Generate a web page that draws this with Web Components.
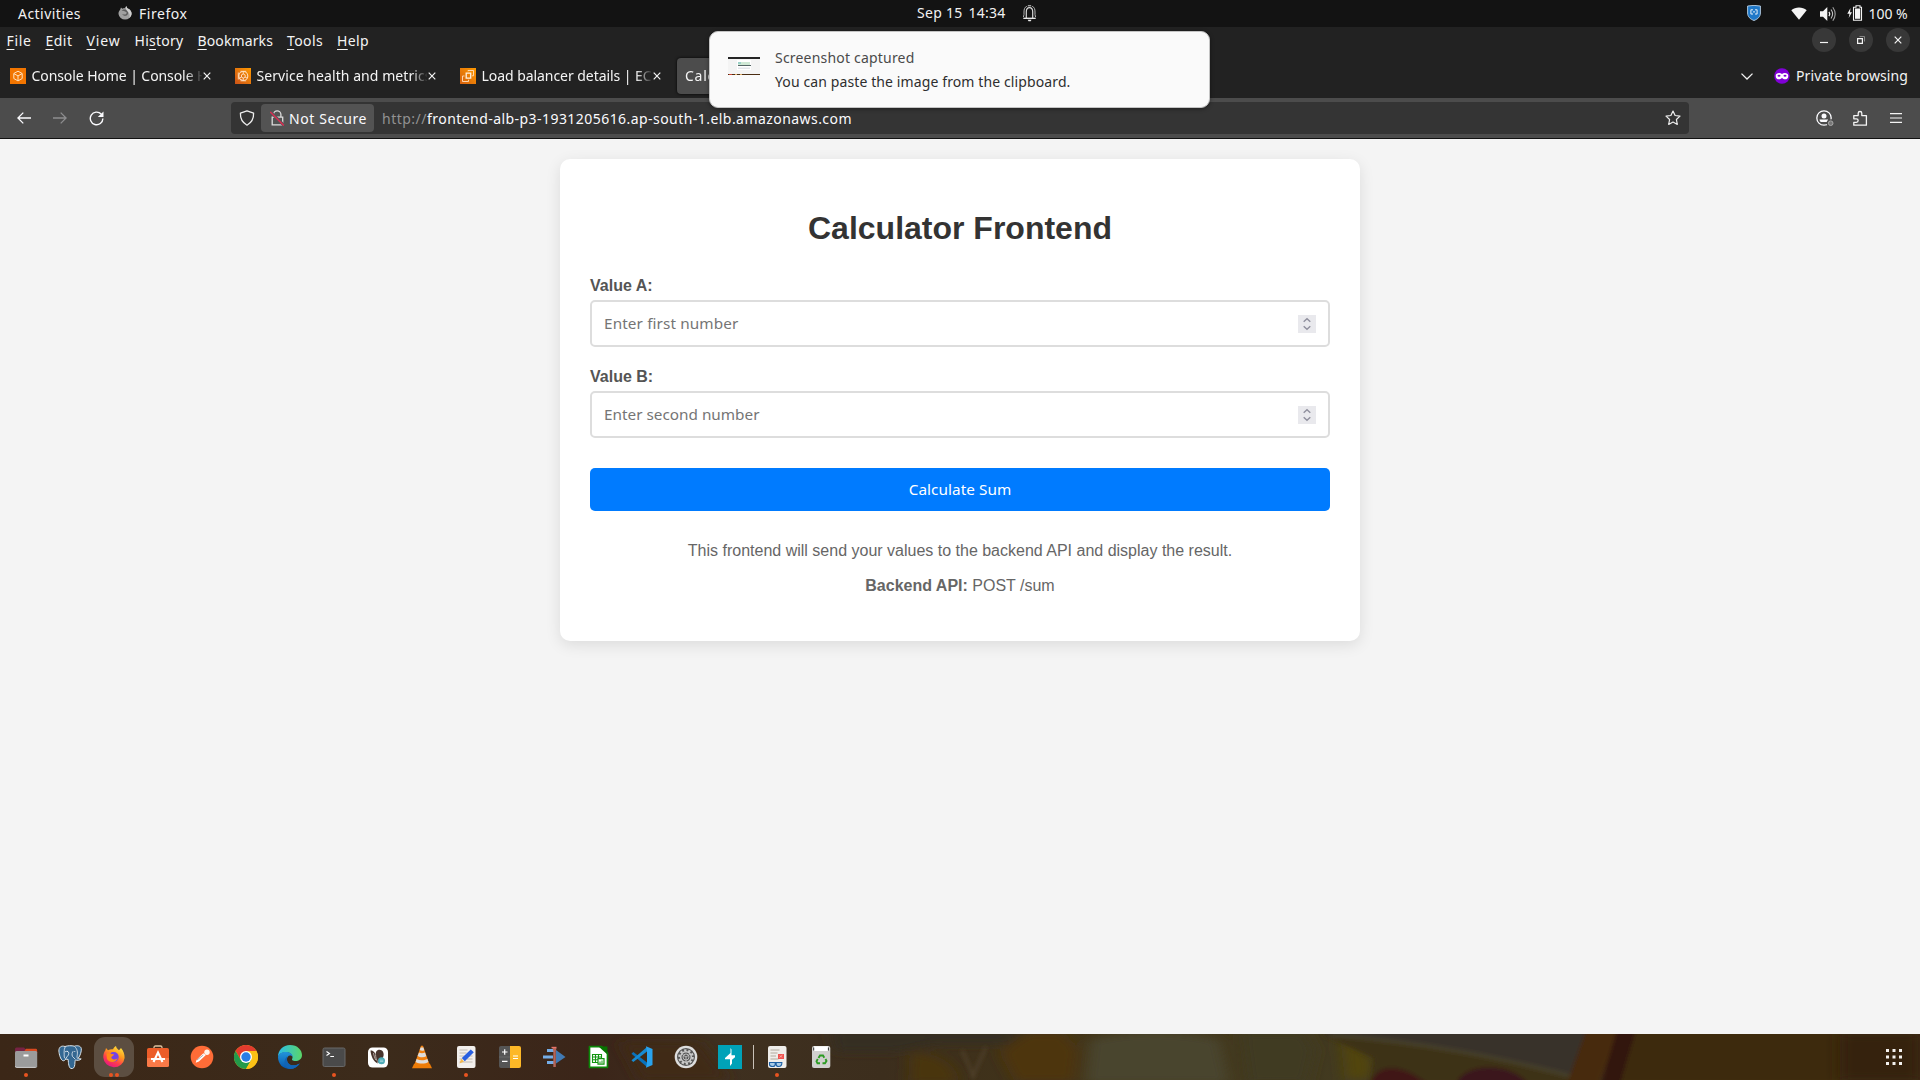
<!DOCTYPE html>
<html lang="en">
<head>
<meta charset="utf-8">
<title>Calculator Frontend</title>
<style>
html,body{margin:0;height:100%;overflow:hidden;background:#f4f4f4}
body{font-family:"Noto Sans","Open Sans",sans-serif;font-size:14px}
</style>
</head>
<body>
<desktop-screen></desktop-screen>
<script>
const ICONS = {
fox:[14,14,'0 0 14 14','<path d="M2 4 3 1.6l1.3 1.2C5.400 2.300 6 2.200 6.600 2.300L8.300 0l1 2.200C12.500 3.500 13.700 5.500 13.600 8A6.600 6.200 0 0 1 .5 8C.4 6.300 1 5 2 4z" fill="#a0a0a0"/><path d="M3.500 4.500 6 5 8.600 6.200C9 9 6 9 4.300 8 5 10.500 9.500 10.500 10 7.500 10.200 5.800 9.500 4.800 8.300 3.800 6.500 3 4.500 3.500 3.500 4.500z" fill="#5c5c5c"/><path d="M8.300 0l1 2.200C12.500 3.500 13.700 5.500 13.600 8c-.3 1.800-1 3-2.300 4 1-3 .2-5.200-1.600-6.600C8 4 7.500 2 8.300 0z" fill="#d0d0d0"/>'],
bell:[13,17,'0 0 13 17','<path d="M.3 13.300h12.400" stroke="#f2f2f2" stroke-width="1.300"/><path d="M3.300 13V6.800C3.300 4 4.500 2.700 6.500 2.700S9.700 4 9.700 6.800V13" fill="none" stroke="#d8d8d8" stroke-width="1.200"/><path d="M3.800 1.300C1.500 2.300 1 4.300 1 7v2.500L.4 12M9.200 1.300C11.500 2.300 12 4.300 12 7v2.500l.6 2.500" fill="none" stroke="#b4b4b4" stroke-width="1"/><path d="M4.800.8h3.400" stroke="#ddd" stroke-width="1"/><path d="M4.700 14.800h3.800l-.8 1.500H5.500z" fill="#eee"/>'],
shield:[14,16,'0 0 14 16','<path d="M.6 1 7 .4l6.400.6v7c0 3.700-2.500 6-6.400 7.500C3 14 .6 11.700.6 8z" fill="#1f78c8" stroke="#bcd4e8" stroke-width=".9"/><path d="M4 4.800h2M8 4.800h2M4 9h2M8 9h2M3.900 4.600V9.200M10.100 4.600V9.200M6 6.900h2" fill="none" stroke="#e4eef8" stroke-width="1"/>'],
wifi:[16,13,'0 0 16 13','<path d="M8 12.700.3 3.300C4.500-.3 11.500-.3 15.700 3.300z" fill="#f4f4f4"/>'],
speaker:[16,16,'0 0 16 16','<path d="M0 5.300h3L7.300 1v14L3 10.700H0z" fill="#f4f4f4"/><path d="M9 5.800c1 1.400 1 3 0 4.400" fill="none" stroke="#f4f4f4" stroke-width="1.300"/><path d="M11 3.500c2 2.800 2 6.200 0 9" fill="none" stroke="#c0c0c0" stroke-width="1.100"/><path d="M12.800 1.200c3 4.300 3 9.300 0 13.600" fill="none" stroke="#a0a0a0" stroke-width="1.100"/>'],
battery:[16,16,'0 0 16 16','<path d="M3.500 3 .3 8.800h2.200L1.700 13 5 7.300H3z" fill="#f4f4f4"/><path d="M9 .8h4v1.400h1.500v13h-8v-13H9z" fill="none" stroke="#f4f4f4" stroke-width="1.100"/><path d="M8 3.500h5.200v10.300H8z" fill="#f4f4f4"/>'],
aws1:[16,16,'0 0 16 16','<path d="M0 0h16v16H0z" fill="#f27500"/><path d="M8 3.200l4.200 2.300v5L8 12.900l-4.200-2.400v-5zM4 5.700l4 2.200 4-2.200M8 8v4.700" fill="none" stroke="#ffe3c0" stroke-width="1"/>'],
aws2:[16,16,'0 0 16 16','<defs><linearGradient id="a" x1="0" y1="1" x2="1" y2="0"><stop stop-color="#cb5218"/><stop offset="1" stop-color="#ff9a00"/></linearGradient></defs><path d="M0 0h16v16H0z" fill="url(#a)"/><circle cx="8.300" cy="8" r="4.500" fill="none" stroke="#ffe0c0" stroke-width="1.100"/><circle cx="8.300" cy="8" r="2" fill="none" stroke="#ffe0c0"/><path d="M3.300 4.500v7M5.500 3.300h5.700M5.500 12.800h5.700M8.300 3.500V6M8.300 10v2.500M4.500 10l2-1M12 10l-2-1" stroke="#ffe0c0" stroke-width=".9"/>'],
aws3:[16,16,'0 0 16 16','<defs><linearGradient id="a" x1="0" y1="1" x2="1" y2="0"><stop stop-color="#d4600f"/><stop offset="1" stop-color="#ff9a00"/></linearGradient></defs><path d="M0 0h16v16H0z" fill="url(#a)"/><path d="M6.200 5.200h4.500v5H6.200z" fill="none" stroke="#fff0dc" stroke-width="1.300"/><path d="M8 3.300V2.500h5.500v5.300H12M4.500 8H2.500v5.500h6v-1.700" fill="none" stroke="#ffe0c0" stroke-width=".9"/>'],
close:[8,8,'0 0 8 8','<path d="M.7.7l6.600 6.600M7.300.7.7 7.300" stroke="#f4f4f4" stroke-width="1.200"/>'],
back:[14,12,'0 0 14 12','<path d="M14 6H1M6.300.6.900 6l5.400 5.400" fill="none" stroke="#fbfbfe" stroke-width="1.300"/>'],
fwd:[14,12,'0 0 14 12','<path d="M0 6h13M7.700.6 13.100 6l-5.400 5.400" fill="none" stroke="#8d8d8f" stroke-width="1.300"/>'],
reload:[15,15,'0 0 15 15','<path d="M12.200 3.100A6.300 6.300 0 1 0 13.900 7.500" fill="none" stroke="#fbfbfe" stroke-width="1.400"/><path d="M14.500.4v5.700H8.800z" fill="#fbfbfe"/>'],
guard:[16,16,'0 0 16 16','<path d="M8 .8 14.600 3.100C14.800 8.500 12.700 12.700 8 15.200 3.300 12.700 1.200 8.500 1.400 3.100z" fill="none" stroke="#eee" stroke-width="1.300" stroke-linejoin="round"/>'],
lock:[15,16,'0 0 15 16','<path d="M3.500 7V4.500a3.700 3.700 0 0 1 7.400 0V7M2.200 7.200h10.500v7.600H2.200z" fill="none" stroke="#ddd" stroke-width="1.300"/><path d="M.6 2 14 15.400" stroke="#595959" stroke-width="3"/><path d="M.3 2 13.800 15.500" stroke="#e22850" stroke-width="1.300"/>'],
star:[16,16,'0 0 16 16','<path d="M8 1l2.100 4.500 4.900.6-3.600 3.400.9 4.900L8 12l-4.300 2.400.9-4.900L1 6.100l4.900-.6z" fill="none" stroke="#eee" stroke-width="1.200" stroke-linejoin="round"/>'],
account:[18,17,'0 0 18 17','<circle cx="8" cy="8" r="7.200" fill="none" stroke="#fbfbfe" stroke-width="1.300"/><circle cx="8" cy="6" r="2.500" fill="#fbfbfe"/><path d="M3.500 9.400h8.500v1.200L10.700 12H5.500C4.500 12 3.500 10.700 3.500 9.400z" fill="#fbfbfe"/><circle cx="14.700" cy="13.200" r="4" fill="#4c4c4c"/><circle cx="14.700" cy="13.200" r="2.300" fill="#777" stroke="#aaa" stroke-width="1"/>'],
puzzle:[15,16,'0 0 15 16','<path d="M.8 5.600h4.400V3.300a1.800 1.800 0 0 1 3.600 0v2.300h4.600v9.600H.8v-2.900h2.600a1.700 1.700 0 0 0 0-3.500H.8z" fill="none" stroke="#f4f4f4" stroke-width="1.300" stroke-linejoin="round"/>'],
menu:[12,10,'0 0 12 10','<path d="M0 .7h12M0 5h12M0 9.300h12" stroke="#f4f4f4" stroke-width="1.200"/>'],
chev:[12,7,'0 0 12 7','<path d="M.5.600 6 6l5.500-5.400" fill="none" stroke="#f4f4f4" stroke-width="1.300"/>'],
mask:[16,16,'0 0 16 16','<circle cx="8" cy="8" r="7.800" fill="#8000d7"/><path d="M1.700 7.700C1.700 5 5.800 4 8 6c2.200-2 6.300-1 6.300 1.700 0 4.300-4.300 4.600-6.300 2-2 2.600-6.300 2.300-6.300-2z" fill="#fff"/><ellipse cx="5" cy="7.800" rx="1.500" ry="1" fill="#8000d7"/><ellipse cx="11" cy="7.800" rx="1.500" ry="1" fill="#8000d7"/>'],
min:[8,8,'0 0 8 8','<path d="M0 6.500h8" stroke="#f4f4f4" stroke-width="1.200"/>'],
restore:[8,8,'0 0 8 8','<path d="M.6 2.600h4.800v4.800H.6z" fill="none" stroke="#f4f4f4" stroke-width="1.200"/><path d="M2.500.5h5v5" fill="none" stroke="#888"/>'],
thumb:[32,18,'0 0 32 18','<path d="M0 0h32v18H0z" fill="#f4f4f4"/><path d="M0 0h32v2H0z" fill="#252525"/><path d="M9 3h14v10H9z" fill="#fff"/><path d="M10 5h12v3H10z" fill="#cfe8d5"/><path d="M10 5.500h3v1h-3z" fill="#6bb"/><path d="M10 8h13v1H10z" fill="#566"/><path d="M10 10.500h12v1.500H10z" fill="#e3e5ea"/><path d="M0 17h32v1H0z" fill="#4a2d12"/><path d="M1 17h3v1H1z" fill="#c43"/><path d="M7 17h2v1H7zM12 17h2v1h-2z" fill="#da6"/>'],
files:[24,24,'0 0 24 24','<path d="M1 4.500C1 3.200 1.500 2.500 2.700 2.500H10l1.700 1.800h10.200q1.200 0 1.200 1.200V9H1z" fill="#762344"/><path d="M12 3.800h9.800q1.300 0 1.300 1.200v3H9z" fill="#d94a20"/><path d="M1 7.500q0-1.500 1.500-1.500h19.200q1.500 0 1.500 1.500v13.700q0 1.500-1.500 1.500H2.500q-1.500 0-1.500-1.500z" fill="#9b9b9b"/><path d="M1.500 21.200q0 1.200 1.200 1.200h19" stroke="#ccc" fill="none"/><path d="M9.500 9.500h5v2h-5z" fill="#fff"/>'],
pg:[24,24,'0 0 24 24','<path d="M7 1.500C3 .2.700 2.500.9 6c.2 3.500 1.700 8.500 3.600 9.500 1.500.8 2.500-.5 3.500-1.500l2.200.5c.2 3.500.6 8.500 2.800 9 2.200.5 3.600-1 3.800-4 .1-2 .2-3.800.6-4.600 1.800.8 4.500.4 5.800-1-1.500-.2-2.400-.2-2.900-.7 2-2.700 3.300-7 3-9.600C22.800.7 19 .2 16.500 1.200 13.500.4 9.700.600 7 1.500z" fill="#336791" stroke="#dce7ee" stroke-width="1"/><path d="M7.200 2C5.500 5 6.300 9 6.200 11c-.1 1.700.8 2.500 2 3.200M16.500 1.500c3 2.500 3.200 6 2.700 9-.3 1.700-.2 2.300.8 3.300M7 6.800c1.800-1 3.800-.5 3.800 1.400 0 3-2.300 3-2.600 5M17 14l-2.500-2.500c-1-2-.2-4.500.7-5.300" fill="none" stroke="#e6eef4" stroke-width=".8"/><circle cx="9.300" cy="6.500" r=".5" fill="#fff"/><circle cx="16.800" cy="6.500" r=".5" fill="#fff"/>'],
firefox:[24,24,'0 0 24 24','<defs><linearGradient id="a" x1=".85" y1="0" x2=".3" y2="1"><stop stop-color="#fff044"/><stop offset=".4" stop-color="#ff9a1e"/><stop offset=".7" stop-color="#ff3d4b"/><stop offset="1" stop-color="#e31587"/></linearGradient></defs><path d="M3.300 5.500 4 3l2 2.200c1.500-.8 3-1.200 5-1C11.600 2.700 13 1.500 14 1c.2 1.600 1.400 3 3 4.200L19 3c2.500 3 3.700 6 3.600 10A10.700 10.500 0 0 1 1.300 12.500C1.200 9.500 2 7 3.300 5.500z" fill="url(#a)"/><circle cx="11.700" cy="12" r="5" fill="#7542e5"/><path d="M4.500 8.500c2-1 3.800-.5 5 .5l2.500.2c-.3 2-2.500 1.800-2.800 3.300 1.300 3 5.800 2.500 6.700-.2-.8 5.500-8.500 6.500-11 1.500z" fill="#ff8a16"/>'],
store:[24,24,'0 0 24 24','<path d="M8 4V2.500q0-1.500 1.500-1.500h5q1.500 0 1.500 1.500V4" fill="none" stroke="#e0c3a1" stroke-width="1.300"/><rect x="1" y="3" width="22" height="19" rx="1.800" fill="#ec5d29"/><path d="M1 13h22v7.200q0 1.800-1.800 1.800H2.800Q1 22 1 20.200z" fill="#f97947"/><path d="M7.500 17 12 7.500l4.500 9.500M5 14h14" fill="none" stroke="#fff" stroke-width="2.100"/>'],
postman:[24,24,'0 0 24 24','<circle cx="12" cy="12" r="11.300" fill="#ff6c37"/><circle cx="17" cy="7.200" r="2.700" fill="#fff4ea"/><path d="M13.300 8.200 6.500 15l-.8 2.700 3.200-1.100 7-6.500z" fill="#fff"/><path d="m7 15 6.300-5" stroke="#777" stroke-width=".6"/>'],
chrome:[24,24,'0 0 24 24','<circle cx="12" cy="12" r="12" fill="#fbc116"/><path d="M12 12 22.400 6A12 12 0 0 0 1.600 6L6.800 15z" fill="#e33b2e"/><path d="M1.600 6A12 12 0 0 0 12 24l5.200-9H6.800z" fill="#229a4b"/><path d="M12 24A12 12 0 0 0 22.400 6H12l5.200 9z" fill="#fbc116"/><circle cx="12" cy="12" r="6" fill="#fff"/><circle cx="12" cy="12" r="4.700" fill="#287de6"/>'],
edge:[24,24,'0 0 24 24','<defs><linearGradient id="a"><stop stop-color="#2abdea"/><stop offset="1" stop-color="#5bd668"/></linearGradient><linearGradient id="b" x1="0" y1="0" x2="0" y2="1"><stop stop-color="#2295db"/><stop offset="1" stop-color="#0856ad"/></linearGradient></defs><path d="M0 12C0 5 5 0 12 0c7.500 0 12 5 12 10 0 4-3.300 6-6.500 6-3 0-4.300-1-3-3C15 10 12 7 8 7 4 7 .7 9.500 0 12z" fill="url(#a)"/><path d="M0 12C.5 9 3.500 7 7.500 7 12 7 14.800 9 14.500 12c-2-3-6-1-5.500 3 .3 4.500 5.500 7.500 12.800 3.500C19.500 22 16 24 12 24 5 24 0 19 0 12z" fill="url(#b)"/><path d="M9 15c.3 4.500 5.500 7.500 12.800 3.500C19.500 22 16 24 12 24 7 23.500 4 17 9 11.500z" fill="#1264b5"/>'],
term:[24,24,'0 0 24 24','<rect x="1" y="3" width="22" height="18.500" rx="1.500" fill="#4a4a4a" stroke="#686868"/><path d="m4.500 6.500 3 2-3 2M8.300 11.500H12" fill="none" stroke="#fff" stroke-width="1.100"/>'],
dbeaver:[24,24,'0 0 24 24','<rect x="2" y="2.500" width="20" height="20" rx="4.500" fill="#fff"/><path d="M4.500 5.500C7 5 9.500 8 9.500 10c.3-2.500.5-4 2-4.800 4-1.700 6.800 1.800 6.100 5.300-.5 2.500-1.300 3-3.200 4-.3 2-.8 2.700-1.300 3.700-.8-.5-1.300-1.200-1.700-2l.3 2.300C7 16 5 11 4.500 5.500z" fill="#48352e"/><path d="M9.500 9.500c.2 3 .8 5 1.900 6.800M7.500 8c.5 3 1.200 5 2.300 7" stroke="#d8d0cc" stroke-width=".7" fill="none"/><circle cx="15.500" cy="15.800" r="3.500" fill="#4cabb8"/><path d="M13.800 15.200h3.500M13.800 16.600h3.500" stroke="#bde2e6" stroke-width=".7"/>'],
vlc:[24,24,'0 0 24 24','<path d="m4 19 2-1.800h12L20 19l2 4.300H2z" fill="#ed7c08"/><path d="M11 .7h2L19 18c-2.500 2-11.500 2-14 0z" fill="#f08010"/><path d="m9.700 5 .9-2.500h2.800l.9 2.700c-1.500.8-3.300.7-4.600-.2zM7.600 11 9 7.500c2 1 4.300.9 6-.1l1.300 3.900c-2.600 1.500-6.300 1.300-8.700-.3zM5.600 17l1-3c3.300 1.800 7.500 1.800 10.800 0l1 3c-3.500 2-9 2-12.800 0z" fill="#ddd"/>'],
editor:[24,24,'0 0 24 24','<rect x="3" y="1" width="18.500" height="22" rx="2" fill="#f2efec"/><path d="M5.500 5h8M5.500 8h7M5.500 11h5M14.500 11h4M5.500 14h3M13 14h5.500M5.500 17h13" stroke="#bbb5ad" stroke-width=".9"/><path d="m5.500 18.500 1.800-4.800 2.700 2.700z" fill="#f4b84c"/><path d="m7.800 13 9-8.500 3 2.800-9 9z" fill="#285fe0"/>'],
calc:[24,24,'0 0 24 24','<path d="M3 1h9v22H3q-2 0-2-2V3q0-2 2-2z" fill="#555"/><path d="M12 1h9q2 0 2 2v18q0 2-2 2h-9z" fill="#fdb827"/><path d="M1 12h11" stroke="#777" stroke-width=".6"/><path d="M4 7h5.500M6.700 4.200v5.600M4 16.300h5.500M15 11h5M15 13.500h5" stroke="#fff" stroke-width="1.200"/>'],
remote:[24,24,'0 0 24 24','<path d="M5 4h8v3H5zM1 10.500h10v3H1zM5 16h8v3H5z" fill="#75ade7"/><path d="m14 5 9.500 7L14 18.500z" fill="#417ab4"/><path d="M10.500 3h4l-.7 3v16h-2.500V6z" fill="#b36559"/><path d="M9.500 2.500h5" stroke="#e67469" stroke-width="1.400"/>'],
sheet:[24,24,'0 0 24 24','<path d="M3.500 1.700h12L21.500 8v14.300h-18z" fill="#fff" stroke="#0b8607" stroke-width="1.700" stroke-linejoin="round"/><path d="M12.500 1.500h8.900v8z" fill="#077300"/><path d="M6.500 9.500h9v8h-9zM6.500 12h9M6.500 14.700h9M9.500 9.500v8M12.500 9.500v8" fill="none" stroke="#139510" stroke-width="1.100"/><path d="M12 13.700h6v5.500h-6z" fill="#fff" stroke="#139510" stroke-width="1.200"/><path d="M14 16.500v2M16 15.500v3" stroke="#139510"/>'],
code:[24,24,'0 0 24 24','<path d="M1.500 8.700 3.300 7 17 17.500V22z" fill="#0872bc"/><path d="m1.500 15.300 1.800 1.700L17 6.500V2z" fill="#168bd2"/><path d="M16 1.300 22.500 4v16L16 22.700 17 17.500v-11z" fill="#29a3ee"/>'],
settings:[24,24,'0 0 24 24','<circle cx="12" cy="12" r="11.300" fill="#ddd"/><circle cx="12" cy="12" r="9" fill="#565656"/><circle cx="12" cy="12" r="6.700" fill="none" stroke="#cacaca" stroke-width="2.200" stroke-dasharray="2.340 1.870"/><circle cx="12" cy="12" r="5.300" fill="none" stroke="#cacaca" stroke-width="1.500"/><circle cx="12" cy="12" r="3" fill="none" stroke="#bbb" stroke-width="1"/><path d="M12 12v5M12 12 8 9.300M12 12l4-2.700" stroke="#bbb" stroke-width="1"/>'],
burp:[24,24,'0 0 24 24','<path d="M0 0h24v24H0z" fill="#00a2b8"/><path d="M12.500 3v5L7 13v1.300h5V21l2-2.500v-3.700L17 12.300V10.300h-3.500V4.500z" fill="#fff"/>'],
viewer:[24,24,'0 0 24 24','<rect x="3" y="1" width="18.500" height="22" rx="2" fill="#efedea"/><path d="M5.500 5h9M5.500 8h7M5.500 11h5.500M5.500 14h8" stroke="#aaa396" stroke-width=".9"/><path d="M13 9h6v5h-6z" fill="#ef5350"/><path d="M14.500 12.500 17.500 10M15 10.500l2 2" stroke="#ffc6c2" stroke-width=".7"/><path d="M4.500 17.500h5.700v2q0 2-2.500 2-3.200 0-3.200-2zM11.200 17.500h5.700q0 4-3.200 4-2.500 0-2.500-2zM10 18h1.400" fill="#a9cce8" stroke="#1d60a5" stroke-width="1.100"/>'],
trash:[24,24,'0 0 24 24','<rect x="3" y="1" width="18.300" height="22" rx="2" fill="#d1d0ce"/><path d="M5 1.300h14V6H5z" fill="#fff"/><path d="M4.700 2.500v3M19.400 2.500v3" stroke="#333"/><path d="M9.500 13 11 10.500h3l1.300 2.200M16.500 14l1 2-1.500 2.300h-2.500M11 18.300H8.500L7.500 16.300l1.300-2.300" fill="none" stroke="#2d9b23" stroke-width="1.900"/>'],
grid:[16,16,'0 0 16 16','<path d="M0 0h3v3H0zM6.500 0h3v3h-3zM13 0h3v3h-3zM0 6.500h3v3H0zM6.500 6.500h3v3h-3zM13 6.500h3v3h-3zM0 13h3v3H0zM6.500 13h3v3h-3zM13 13h3v3h-3z" fill="#f4f1ee"/>']
};

class Base extends HTMLElement {
  constructor(){ super(); this.attachShadow({mode:'open'}); }
  paint(css, html){ this.shadowRoot.innerHTML = `<style>*{box-sizing:border-box}${css}</style>${html}`; }
}

/* Inline icon taken from the icon set by name */
class UiIcon extends Base {
  connectedCallback(){
    const [w,h,vb,body] = ICONS[this.getAttribute('name')];
    this.paint(':host{display:block;flex:none}svg{display:block}', `<svg width="${w}" height="${h}" viewBox="${vb}">${body}</svg>`);
  }
}
customElements.define('ui-icon', UiIcon);

/* One line of text whose tracking is tuned so that it fills the width given by "w" */
class UiText extends Base {
  connectedCallback(){
    this.paint(':host{display:block;flex:none;white-space:pre;line-height:20px}span{display:inline-block}::slotted(u){text-underline-offset:3px;text-decoration-thickness:1px}','<span><slot></slot></span>');
    const w = +this.getAttribute('w');
    if (!w) return;
    const span = this.shadowRoot.querySelector('span');
    const gap = (w - span.getBoundingClientRect().width) / this.textContent.length;
    span.style.letterSpacing = gap.toFixed(3) + 'px';
    this.style.width = w + 'px';
  }
}
customElements.define('ui-text', UiText);

class TopPanel extends Base {
  connectedCallback(){
    this.paint(`:host{display:flex;height:27px;background:#131313;color:#f2f2f2;align-items:center}
    .g{display:flex;align-items:center}.l{padding-left:18px;width:917px;flex:none}.c{padding-bottom:1px}.r{flex:1;justify-content:flex-end;padding-right:12.500px}`,
    `<div class="g l"><ui-text w="63">Activities</ui-text><ui-icon name="fox" style="margin:-2px 7px 0 37px"></ui-icon><ui-text w="48.500">Firefox</ui-text></div>
     <div class="g c"><ui-text w="45.500">Sep 15</ui-text><ui-text w="37" style="margin-left:6px">14:34</ui-text><ui-icon name="bell" style="margin-left:17px"></ui-icon></div>
     <div class="g r"><ui-icon name="shield" style="margin:-2px 30px 0 0"></ui-icon><ui-icon name="wifi" style="margin-right:13px"></ui-icon><ui-icon name="speaker" style="margin-right:11px"></ui-icon><ui-icon name="battery" style="margin:-2px 6px 0 0"></ui-icon><ui-text w="39">100 %</ui-text></div>`);
  }
}
customElements.define('top-panel', TopPanel);

class MenuRow extends Base {
  connectedCallback(){
    this.paint(`:host{display:flex;height:27px;background:#222;color:#f4f4f4;justify-content:space-between;padding:0 10px 0 6.500px}
    nav{display:flex;padding-top:4px;gap:14px}
    .w{display:flex;gap:13px;padding-top:1px}.b{width:24px;height:24px;border-radius:50%;background:#383838;display:flex;align-items:center;justify-content:center}`,
    `<nav><ui-text w="25"><u>F</u>ile</ui-text><ui-text w="27"><u>E</u>dit</ui-text><ui-text w="34"><u>V</u>iew</ui-text><ui-text w="49">Hi<u>s</u>tory</ui-text><ui-text w="75.500"><u>B</u>ookmarks</ui-text><ui-text w="36"><u>T</u>ools</ui-text><ui-text w="32"><u>H</u>elp</ui-text></nav>
     <div class="w"><div class="b"><ui-icon name="min"></ui-icon></div><div class="b"><ui-icon name="restore"></ui-icon></div><div class="b"><ui-icon name="close"></ui-icon></div></div>`);
  }
}
customElements.define('menu-row', MenuRow);

class BrowserTab extends Base {
  connectedCallback(){
    const icon = this.getAttribute('icon');
    this.paint(`:host{display:flex;align-items:center;width:225px;height:36px;padding-left:8px;color:#f4f4f4;flex:none}
    :host([active]){background:#4c4c4c;border-radius:4px;box-shadow:0 0 3px #000}
    .t{width:170px;margin:0 1px 0 5.500px;overflow:hidden;-webkit-mask:linear-gradient(90deg,#000 154px,transparent 171px)}:host([active]) .t{margin-left:0}`,
    `${icon?`<ui-icon name="${icon}"></ui-icon>`:''}<div class="t"><slot></slot></div><ui-icon name="close"></ui-icon>`);
  }
}
customElements.define('browser-tab', BrowserTab);

class TabStrip extends Base {
  connectedCallback(){
    this.paint(`:host{display:flex;height:44px;padding:4px 12px 4px 2px;background:#222;color:#f4f4f4;justify-content:space-between}
    .g{display:flex;align-items:center}`,
    `<div class="g"><browser-tab icon="aws1"><ui-text w="205">Console Home | Console Home</ui-text></browser-tab><browser-tab icon="aws2"><ui-text w="175">Service health and metrics</ui-text></browser-tab><browser-tab icon="aws3"><ui-text w="178">Load balancer details | EC2</ui-text></browser-tab><browser-tab active><ui-text w="30">Calc</ui-text></browser-tab></div>
     <div class="g"><ui-icon name="chev" style="margin-right:21px"></ui-icon><ui-icon name="mask" style="margin-right:6.500px"></ui-icon><ui-text w="112">Private browsing</ui-text></div>`);
  }
}
customElements.define('tab-strip', TabStrip);

class NavBar extends Base {
  connectedCallback(){
    this.paint(`:host{display:flex;height:41px;background:#4c4c4c;border-bottom:1px solid #111;color:#fbfbfe;padding:4px 18px 4px 17px;align-items:flex-start}
    .g{display:flex;align-items:center;height:32px}.l{width:214px}.url{width:1458px;background:#343434;border-radius:4px;padding-left:8px}.url ui-text{padding-top:1px;line-height:21px}
    .sec{display:flex;align-items:center;width:113px;height:28px;background:#535353;border-radius:4px;margin:0 8px 0 6px;padding-left:9px}.r{flex:1;justify-content:flex-end}`,
    `<div class="g l"><ui-icon name="back"></ui-icon><ui-icon name="fwd" style="margin:0 21.500px 0 22px"></ui-icon><ui-icon name="reload"></ui-icon></div>
     <div class="g url"><ui-icon name="guard"></ui-icon><div class="sec"><ui-icon name="lock" style="margin-right:4px"></ui-icon><ui-text w="78">Not Secure</ui-text></div><ui-text w="45" style="color:#929292">http://</ui-text><ui-text w="425">frontend-alb-p3-1931205616.ap-south-1.elb.amazonaws.com</ui-text><ui-icon name="star" style="margin:0 8px 0 auto"></ui-icon></div>
     <div class="g r"><ui-icon name="account" style="margin-right:19px"></ui-icon><ui-icon name="puzzle" style="margin-right:22px"></ui-icon><ui-icon name="menu"></ui-icon></div>`);
  }
}
customElements.define('nav-bar', NavBar);

class ToastNote extends Base {
  connectedCallback(){
    this.paint(`:host{position:absolute;left:709px;top:31px;width:501px;height:77px;background:#fafafa;border:1px solid #c4c4c4;border-radius:9px;display:flex;padding:14px 18px;box-shadow:0 1px 4px rgba(0,0,0,.4);color:#2e2e2e}
    .c{margin-left:15px}`,
    `<ui-icon name="thumb" style="margin-top:11px"></ui-icon><div class="c"><ui-text w="139.500" style="color:#4a4a4a;line-height:24px">Screenshot captured</ui-text><ui-text w="295.500" style="line-height:24px">You can paste the image from the clipboard.</ui-text></div>`);
  }
}
customElements.define('toast-note', ToastNote);

class NumberField extends Base {
  connectedCallback(){
    this.paint(`:host{display:block;font:bold 16px/18px "Liberation Sans",Arial,sans-serif;color:#555}
    .i{margin-top:5px;height:47px;border:2px solid #ddd;border-radius:5px;background:#fff;display:flex;align-items:center;justify-content:space-between;padding:0 12px;font:15.300px "Noto Sans",sans-serif;color:#757575}
    .i ui-text{padding-bottom:2px}.s{width:18px;height:18px;background:#e9e9ed;display:block;margin-top:1px}`,
    `<div>${this.getAttribute('label')}</div><div class="i"><ui-text w="${this.getAttribute('w')}">${this.getAttribute('hint')}</ui-text><svg class="s" viewBox="0 0 18 18"><path d="M5.700 6.700 9 3.700l3.300 3M5.700 11.300l3.300 3 3.300-3" fill="none" stroke="#8f8f9d" stroke-width="1.400"/></svg></div>`);
  }
}
customElements.define('number-field', NumberField);

class CalcCard extends Base {
  connectedCallback(){
    this.paint(`:host{display:block;width:800px;height:482px;background:#fff;border-radius:10px;padding:30px;box-shadow:0 4px 15px rgba(0,0,0,.1);font:16px/18px "Liberation Sans",Arial,sans-serif;color:#666;text-align:center}
    h1{margin:21px 0 30px;font-size:32px;line-height:37px;color:#333}number-field{text-align:left;margin-bottom:21px}
    button{display:flex;align-items:center;justify-content:center;width:100%;height:43px;margin:30px 0 0;padding:0 0 2px;border:0;border-radius:5px;background:#007bff;color:#fff;font:15.300px "Noto Sans",sans-serif}p{margin:0 0 17px}`,
    `<h1>Calculator Frontend</h1><number-field label="Value A:" hint="Enter first number" w="134.500"></number-field><number-field label="Value B:" hint="Enter second number" w="155.500"></number-field>
    <button><ui-text w="102.500">Calculate Sum</ui-text></button><p style="margin-top:31px">This frontend will send your values to the backend API and display the result.</p><p><b>Backend API:</b> POST /sum</p>`);
  }
}
customElements.define('calc-card', CalcCard);

class DockItem extends Base {
  connectedCallback(){
    const n = +this.getAttribute('dots') || 0;
    this.paint(`:host{display:flex;width:44px;height:46px;justify-content:center;align-items:center;flex:none;position:relative}
    .b{width:40px;height:40px;border-radius:11px;display:flex;align-items:center;justify-content:center}:host([active]) .b{background:#5c4e41}
    .d{position:absolute;bottom:3px;left:0;right:0;display:flex;gap:1.500px;justify-content:center}.d i{width:4px;height:4px;border-radius:50%;background:#e95420}`,
    `<div class="b"><ui-icon name="${this.getAttribute('icon')}"></ui-icon></div><div class="d">${'<i></i>'.repeat(n)}</div>`);
  }
}
customElements.define('dock-item', DockItem);

class DockBar extends Base {
  connectedCallback(){
    const items = [['files',1],['pg'],['firefox',2,1],['store'],['postman'],['chrome'],['edge'],['term',1],['dbeaver'],['vlc'],['editor',1],['calc'],['remote'],['sheet'],['code'],['settings'],['burp'],0,['viewer',1],['trash']];
    this.paint(`:host{display:flex;height:46px;position:relative;background:#3b2717;padding-left:4px;align-items:center;overflow:hidden}
    .bg{position:absolute;inset:0;width:1920px;height:46px}.sep{width:1px;height:24px;margin:0 1px;background:#c9c1b8;position:relative}.apps{margin:0 18px 0 auto;position:relative}`,
    `<svg class="bg" viewBox="0 0 1920 46" preserveAspectRatio="none"><defs><linearGradient id="k"><stop offset="0" stop-color="#3b2717"/><stop offset=".2" stop-color="#3c2b1b"/><stop offset=".31" stop-color="#3b2519"/><stop offset=".37" stop-color="#3f3020"/><stop offset=".46" stop-color="#3c2e1d"/><stop offset=".57" stop-color="#423518"/><stop offset=".7" stop-color="#423a20"/><stop offset="1" stop-color="#3b2810"/></linearGradient><filter id="f" filterUnits="userSpaceOnUse" x="0" y="-40" width="1920" height="130"><feGaussianBlur stdDeviation="7 4"/></filter><filter id="s" filterUnits="userSpaceOnUse" x="0" y="-40" width="1920" height="130"><feGaussianBlur stdDeviation="2"/></filter></defs>
    <path d="M0 0h1920v46H0z" fill="url(#k)"/>
    <g filter="url(#f)"><path d="M620 8h80l30 38h-90z" fill="#412a15"/><path d="M830 -4h195l-20 14h-70l-40 8h-60z" fill="#352e22"/><path d="M910 18c30 0 50 14 48 32h-50z" fill="#483510"/><path d="M1028-2h36l15 18-4 32h-60l-16-30z" fill="#4e340f"/><path d="M1090 6c40-12 100-10 130 0l10 44H1085z" fill="#4a452d"/><path d="M1240-2h65l10 18-8 34h-60z" fill="#403a22"/><path d="M1340 0c22 5 40 22 30 46h-25z" fill="#514510"/></g>
    <path d="M962 16l12 28M986 13l-14 31" stroke="#54452f" stroke-width="2" filter="url(#s)"/>
    <g filter="url(#s)"><path d="M1320 0c120 8 200 30 290 50h-240l4-26z" fill="#3c3013"/><path d="M1326-6h266l-14 50c-80-24-150-34-252-44z" fill="#37302c"/><path d="M1330 1c90 7 170 22 260 46" fill="none" stroke="#47402a" stroke-width="4"/><path d="M1370 50c5-16 22-22 46-8l12 8z" fill="#3f1919"/><path d="M1456 50c8-22 56-22 72 0z" fill="#3b131b"/><path d="M1586-4h34l-22 56h-32z" fill="#47290e"/><path d="M1617-4h22l-18 54h-20z" fill="#33180f"/><path d="M1636-4h300v54H1620z" fill="#3e290f"/></g><path d="M1840 0h80v46h-80z" fill="#36220f" filter="url(#f)"/></svg>
    ${items.map(i=>i?`<dock-item icon="${i[0]}" dots="${i[1]||0}" ${i[2]?'active':''}></dock-item>`:'<div class="sep"></div>').join('')}<ui-icon class="apps" name="grid"></ui-icon>`);
  }
}
customElements.define('dock-bar', DockBar);

class DesktopScreen extends Base {
  connectedCallback(){
    this.paint(`:host{display:flex;flex-direction:column;width:1920px;height:1080px;position:relative;overflow:hidden}
    main{flex:1;background:#f4f4f4;padding-top:20px;display:flex;justify-content:center;align-items:flex-start}`,
    `<top-panel></top-panel><menu-row></menu-row><tab-strip></tab-strip><nav-bar></nav-bar><main><calc-card></calc-card></main><dock-bar></dock-bar><toast-note></toast-note>`);
  }
}
customElements.define('desktop-screen', DesktopScreen);
</script>
</body>
</html>
